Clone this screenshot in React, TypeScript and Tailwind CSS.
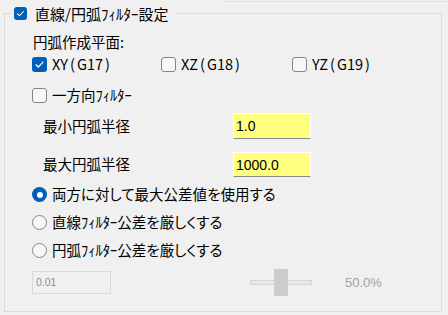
import React from "react";

function Check({ checked, size = 15 }: { checked: boolean; size?: number }) {
  if (checked) {
    return (
      <div
        className="flex shrink-0 items-center justify-center rounded-[3px] bg-[#005fb8]"
        style={{ width: size, height: size }}
      >
        <svg width={size} height={size} viewBox="0 0 15 15">
          <path d="M4 7.8 L6.3 10 L11 5.2" fill="none" stroke="#ffffff" strokeWidth="1.2" strokeLinecap="round" strokeLinejoin="round" />
        </svg>
      </div>
    );
  }
  return (
    <div
      className="shrink-0 rounded-[3px] border border-[#858585] bg-[#f7f7f7]"
      style={{ width: size, height: size }}
    />
  );
}

function Radio({ checked }: { checked: boolean }) {
  if (checked) {
    return (
      <div className="flex h-[15px] w-[15px] shrink-0 items-center justify-center rounded-full bg-[#005fb8]">
        <div className="h-[6px] w-[6px] rounded-full bg-white" />
      </div>
    );
  }
  return <div className="h-[15px] w-[15px] shrink-0 rounded-full border border-[#858585] bg-[#f7f7f7]" />;
}

export default function App() {
  return (
    <div className="relative h-[315px] w-[448px] overflow-hidden bg-[#f0f0f0] font-['Noto_Sans_CJK_JP',sans-serif] text-[14.5px] leading-none text-black">
      <div className="absolute left-[224px] right-0 top-[1px] h-px bg-[#e0e0e0]" />
      <div className="ml-[4px] mt-[13px] flex h-[299px] w-[438px] flex-col border border-[#dcdcdc]">
        <div className="ml-[28px] mt-[18px] flex h-[20px] items-center">円弧作成平面:</div>

        <div className="ml-[27px] mt-[3px] flex h-[19px] items-center">
          <div className="flex w-[129px] items-center gap-[5px]">
            <Check checked />
            <span>XY<span className="mx-[2px]">(</span>G17<span className="ml-[2px]">)</span></span>
          </div>
          <div className="flex w-[131px] items-center gap-[5px]">
            <Check checked={false} />
            <span>XZ<span className="mx-[2px]">(</span>G18<span className="ml-[2px]">)</span></span>
          </div>
          <div className="flex items-center gap-[5px]">
            <Check checked={false} />
            <span>YZ<span className="mx-[2px]">(</span>G19<span className="ml-[2px]">)</span></span>
          </div>
        </div>

        <div className="ml-[27px] mt-[11px] flex h-[20px] items-center gap-[5px]">
          <Check checked={false} />
          <span className="[font-feature-settings:'palt']">一方向ﾌｨﾙﾀｰ</span>
        </div>

        <div className="mt-[8px] flex h-[26px] items-center">
          <span className="w-[228px] pl-[38px]">最小円弧半径</span>
          <div className="flex h-[26px] w-[78px] items-center border border-white border-b-[#8a8a8a] bg-[#ffff80] pl-[2px] font-['Liberation_Sans',sans-serif] text-[14px]">
            1.0
          </div>
        </div>

        <div className="mt-[13px] flex h-[25px] items-center">
          <span className="w-[228px] pl-[38px]">最大円弧半径</span>
          <div className="flex h-[25px] w-[78px] items-center border border-white border-b-[#8a8a8a] bg-[#ffff80] pl-[2px] font-['Liberation_Sans',sans-serif] text-[14px]">
            1000.0
          </div>
        </div>

        <div className="ml-[27px] mt-[8px] flex h-[19px] items-center gap-[5px]">
          <Radio checked />
          <span className="[font-feature-settings:'palt']">両方に対して最大公差値を使用する</span>
        </div>
        <div className="ml-[27px] mt-[8px] flex h-[20px] items-center gap-[5px]">
          <Radio checked={false} />
          <span className="[font-feature-settings:'palt']">直線ﾌｨﾙﾀｰ公差を厳しくする</span>
        </div>
        <div className="ml-[27px] mt-[8px] flex h-[20px] items-center gap-[5px]">
          <Radio checked={false} />
          <span className="[font-feature-settings:'palt']">円弧ﾌｨﾙﾀｰ公差を厳しくする</span>
        </div>

        <div className="ml-[27px] mt-[9px] flex h-[27px] items-center">
          <div className="flex h-[23px] w-[79px] items-center border border-[#dadada] bg-[#f0f0f0] pl-[3px] font-['Liberation_Sans',sans-serif] text-[10.5px] text-[#8d8d8d]">
            0.01
          </div>
          <div className="relative ml-[139px] flex h-[27px] w-[62px] items-center">
            <div className="h-[5px] w-full border border-[#d6d6d6] bg-[#e6e9e6]" />
            <div className="absolute left-[24px] top-0 h-[27px] w-[14px] bg-[#cccccc]" />
          </div>
          <span className="ml-[33px] font-['Liberation_Sans',sans-serif] text-[13px] text-[#a3a3a3]">50.0%</span>
        </div>
      </div>

      <div className="absolute left-[11px] top-[4px] flex h-[19px] items-center gap-[8px] bg-[#f0f0f0] pl-[3px] pr-[9px]">
        <Check checked size={13} />
        <span className="text-[15px] [font-feature-settings:'palt']">直線/円弧ﾌｨﾙﾀｰ設定</span>
      </div>
    </div>
  );
}
